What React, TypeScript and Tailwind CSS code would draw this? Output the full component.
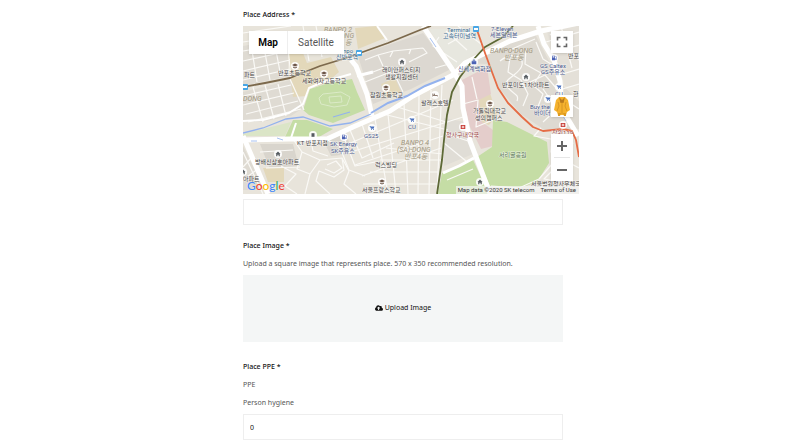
import { useState } from "react";
import { FaCloudUploadAlt } from "react-icons/fa";

const blocks = [
  { d: "M0 20L45 12V50L0 60Z", fill: "#dfdbd3" },
  { d: "M0 66L48 54L60 82L48 90L18 96H0Z", fill: "#dfdbd3" },
  { d: "M50 0H105L112 24L64 42Z", fill: "#e8e4da" },
  { d: "M115 30L145 19L180 7L208 43L192 51L168 63L130 78Z", fill: "#dcd8d1" },
  { d: "M186 3H228L244 20L222 34L212 42Z", fill: "#e7e7df" },
  { d: "M220 37L264 18L292 8L318 58L336 75V103L300 103L278 88L256 62L244 38Z", fill: "#dedad2" },
  { d: "M303 4L336 0V60L322 60L313 30Z", fill: "#e4e0d8" },
  { d: "M17 118H50L56 141H26Z", fill: "#d9d5cd" },
  { d: "M80 114L104 107L108 128L88 130Z", fill: "#d9d5cd" },
  { d: "M0 120L22 164H0Z", fill: "#dedad2" },
  { d: "M201 92L222 96L230 128L201 140Z", fill: "#e0ddd6" },
  { d: "M45 28L60 27L64 37L88 31L96 46L82 58L68 62L64 70L50 71Z", fill: "#e3d8ba" },
  { d: "M112 2L134 0L142 12L115 23Z", fill: "#e3d8ba" },
  { d: "M138 58L152 52L158 66L142 72Z", fill: "#e3d8ba" },
  { d: "M20 142H41V156H25Z", fill: "#e3d8ba" },
  { d: "M234 72L246 64L254 89L246 99L234 95Z", fill: "#e3d8ba" },
  { d: "M219 54L244 41L248 68L236 74L239 96L250 104V120L238 123L227 101L221 76Z", fill: "#e4cdcb" },
  { d: "M67 63L86 57L109 53L114 66L122 84L90 97L66 89L60 84Z", fill: "#c5dda5" },
  { d: "M50 94L64 94L90 103L76 111H42Z", fill: "#c5dda5" },
  { d: "M0 108L48 96L42 110H0Z", fill: "#dbe5c7" },
  { d: "M250 94L264 96L284 106L304 116L306 137L294 156L277 162L247 160L234 131L249 121Z", fill: "#c5dda5" },
  { d: "M199 147L230 134L246 168H195Z", fill: "#c5dda5" },
];

const minorRoads = [
  // north west grid
  "M0 7L48 0M0 16L52 8M0 25L47 17M0 35L46 25M0 45L47 34M0 54L47 43M8 18L14 56M20 16L27 54M31 14L38 51M44 12L48 52M60 0L66 35M73 0L79 31M88 0L94 27",
  "M0 70L48 59M0 79L51 67M3 88L55 75M5 96L58 83M10 61L20 96M22 59L31 93M35 58L43 90M47 53L61 84",
  // centre
  "M122 34L135 29L150 25L180 22M130 46L143 41L158 43M135 29L140 40M150 25L147 31M180 22L184 27L166 36M122 56L150 45M150 45L160 66M168 23L166 28M196 11L190 20L214 36M203 5L224 24M215 0L238 18M205 18L228 5M192 42L206 38",
  // residential streets
  "M86 115L96 119L106 144L122 150M100 109L112 140L132 136M107 104L119 132L151 117M119 98L130 132M132 93L145 168M145 88L153 168M161 77L165 168M176 69L175 168M188 64L186 168M199 59L194 168",
  "M105 118L210 74M108 126L220 91M112 139L200 110M119 150L198 122M136 87L205 104M151 80L203 96M120 158L195 158M127 146H195M137 134H198M143 122L200 128",
  "M50 113L59 126L54 143L67 148L62 168M59 126L77 134L67 148M77 134L99 132L101 144L91 151L76 145L73 155L87 168M99 132L106 145L101 158L113 168M84 139L93 135L99 142L91 147L82 143M38 140L53 148L42 160L54 168M68 115L70 125L85 130",
  "M17 126L50 124M0 126L20 168M23 142L57 141M10 130L0 141M16 142L0 154",
  // east apartments
  "M257 35C267 26 281 29 279 39S260 52 264 60S277 67 274 75M267 31L265 46L278 54L285 68L280 80M283 23L282 38L298 47L290 59L300 68L294 83M293 16L300 33L316 43M285 57L302 49L314 63M300 63L314 83L300 96M316 49L336 43M316 64L336 58M319 72L336 83M303 89L322 83",
  "M269 23L292 13M303 16L336 6M309 27L336 19M318 0L329 42M307 8L336 34M298 102L291 110L330 117L317 132L336 142M309 113L308 126L316 138L301 153L336 159M322 115L326 153M220 78L235 74L233 101L250 94M229 51L234 73",
  "M201 117L223 135M201 107L225 115M248 160L276 162L296 153L310 137M230 143L204 154",
];

const mainRoads = [
  { d: "M-3 114L47 113H84L110 101L147 85L170 70L210 49L222 37L267 15L298 5L336 -3", width: 5 },
  { d: "M108 34L113 40L124 68L129 90", width: 5 },
  { d: "M180 0L209 43L219 60L220 82L227 115L248 170", width: 5 },
  { d: "M0 110L25 168", width: 5 },
  { d: "M295 0L301 18L311 34L317 55L319 83L335 110", width: 5 },
  { d: "M0 95L20 94L46 87L60 78L66 62L80 56L108 48", width: 2 },
  { d: "M114 50L130 46", width: 3 },
  { d: "M200 147L216 140L231 132", width: 3 },
  { d: "M48 112L53 97M134 0L144 14", width: 2 },
];

const places = [
  { x: 35, y: 49, text: "반포초등학교" },
  { x: 59, y: 57, text: "세화여자고등학교" },
  { x: 139, y: 46, text: "래미안퍼스티지" },
  { x: 142, y: 53, text: "생활지원센터" },
  { x: 127, y: 71, text: "잠원초등학교" },
  { x: 178, y: 79, text: "팔래스호텔" },
  { x: 54, y: 119, text: "KT 반포지점" },
  { x: 12, y: 138, text: "방배신삼호아파트" },
  { x: 0, y: 155, text: "아파트" },
  { x: 1, y: 51, text: "파트" },
  { x: 132, y: 141, text: "럭스빌딩" },
  { x: 119, y: 166, text: "서울프랑스학교" },
  { x: 230, y: 87, text: "가톨릭대학교" },
  { x: 232, y: 94, text: "성의캠퍼스" },
  { x: 259, y: 61, text: "반포미도1차아파트" },
  { x: 325, y: 32, text: "반포" },
  { x: 330, y: 70, text: "한" },
  { x: 256, y: 131, text: "서리골공원", fill: "#567452" },
  { x: 203, y: 111, text: "청사구내약국", fill: "#9c4848" },
  { x: 309, y: 109, text: "잠원119", fill: "#9c4848" },
  { x: 288, y: 160, text: "서울법원청사우체국" },
  { x: 215, y: 45, text: "신세계백화점", fill: "#45558a" },
  { x: 204, y: 6, text: "Terminal", fill: "#34668d" },
  { x: 200, y: 12, text: "고속터미널역", fill: "#34668d" },
  { x: 100, y: 27, text: "npo", fill: "#34668d" },
  { x: 93, y: 33, text: "신반포역", fill: "#34668d" },
  { x: 248, y: 5, text: "7-Eleven", fill: "#45558a" },
  { x: 247, y: 11, text: "세븐일레븐", fill: "#45558a" },
  { x: 297, y: 42, text: "GS Caltex", fill: "#45558a" },
  { x: 298, y: 48, text: "GS주유소", fill: "#45558a" },
  { x: 312, y: 70, text: "CU", fill: "#45558a" },
  { x: 287, y: 83, text: "Buy the", fill: "#45558a" },
  { x: 291, y: 89, text: "바이더", fill: "#45558a" },
  { x: 87, y: 120, text: "SK Energy", fill: "#45558a" },
  { x: 88, y: 127, text: "SK주유소", fill: "#45558a" },
  { x: 121, y: 112, text: "GS25", fill: "#45558a" },
  { x: 165, y: 103, text: "CU", fill: "#45558a" },
];

const districts = [
  { x: 81, y: 6, text: "BANPO 2" },
  { x: 84, y: 12, text: "(I)-DONG" },
  { x: 102, y: 19, text: "동" },
  { x: 0, y: 75, text: "DONG" },
  { x: 247, y: 27, text: "BANPO-DONG" },
  { x: 261, y: 34, text: "반포동" },
  { x: 158, y: 119, text: "BANPO 4" },
  { x: 154, y: 126, text: "(SA)-DONG" },
  { x: 161, y: 133, text: "반포4동" },
];

const pins = [
  { x: 52, y: 40, kind: "school" },
  { x: 81, y: 48, kind: "school" },
  { x: 143, y: 62, kind: "school" },
  { x: 139, y: 156, kind: "school" },
  { x: 247, y: 78, kind: "school" },
  { x: 159, y: 36, kind: "home" },
  { x: 35, y: 128, kind: "home" },
  { x: 283, y: 51, kind: "home" },
  { x: 0, y: 146, kind: "home" },
  { x: 237, y: 156, kind: "home" },
  { x: 192, y: 69, kind: "bed" },
  { x: 70, y: 109, kind: "dot" },
  { x: 129, y: 102, kind: "cart" },
  { x: 169, y: 94, kind: "cart" },
  { x: 316, y: 61, kind: "cart" },
  { x: 305, y: 73, kind: "cart" },
  { x: 101, y: 111, kind: "fuel" },
  { x: 311, y: 32, kind: "fuel" },
  { x: 231, y: 36, kind: "bag" },
  { x: 220, y: 101, kind: "cross" },
  { x: 320, y: 99, kind: "cross" },
];

const pinShapes: Record<string, { d: string; fill: string }> = {
  school: { d: "M-3 -1L0 -2.5L3 -1L0 .5ZM-2 .5V1.5L0 2.5L2 1.5V.5L0 1.4Z", fill: "#6c5547" },
  home: { d: "M-2.5 0L0 -2.5L2.5 0H1.8V2.2H.6V.7H-.6V2.2H-1.8V0Z", fill: "#555b60" },
  bed: { d: "M-2.5 -1.5H-2V0H2.5V1.5H2V.8H-2V1.5H-2.5ZM-1.5 -1.2H0V-.3H-1.5Z", fill: "#6c5547" },
  dot: { d: "M-1.5 -1.8H1.5V1.8H-1.5Z", fill: "#555b60" },
  cart: { d: "M-2.5 -2H-1.5L-1.3 -1.5H2.4L1.6 .7H-1L-2 -1.5H-2.5ZM-1 1.2H0V2H-1ZM1 1.2H2V2H1Z", fill: "#4b71bd" },
  fuel: { d: "M-2 -2.3H1V0H1.5V1.3H2V-1L1.4 -1.6L1.8 -2L2.5 -1.2V2H1.2V.5H1V2.3H-2ZM-1.4 -1.7V-.4H.4V-1.7Z", fill: "#4b62b5" },
  bag: { d: "M-2.3 -.7H-1.4C-1.3 -3 1.3 -3 1.4 -.7H2.3V2.3H-2.3ZM-.7 -.7H.7C.6 -2 -.6 -2 -.7 -.7Z", fill: "#4b62b5" },
  cross: { d: "M-2.3 -2H2.3V2H-2.3ZM-.4 -1.3V-.4H-1.3V.4H-.4V1.3H.4V.4H1.3V-.4H.4V-1.3Z", fill: "#c9413b" },
};

function MapDrawing() {
  return (
    <svg
      viewBox="0 0 336 168"
      className="block w-full"
      role="img"
      aria-label="Map of Banpo-dong"
    >
      <rect width="336" height="168" fill="#e8e4db" />
      {blocks.map((block) => (
        <path key={block.d} d={block.d} fill={block.fill} />
      ))}
      <g fill="none" stroke="#faf9f6" strokeWidth="1.2" strokeLinejoin="round">
        {minorRoads.map((d) => (
          <path key={d} d={d} />
        ))}
      </g>
      {/* stadium in the park */}
      <g fill="none" stroke="#dbeac7" strokeWidth="1">
        <path d="M80 68L98 66L107 71L104 79L91 81L78 78L76 72Z" />
        <path d="M86 71L98 70L99 76L87 77Z" />
      </g>
      {mainRoads.map((road) => (
        <path
          key={road.d}
          d={road.d}
          fill="none"
          stroke="#fff"
          strokeWidth={road.width}
          strokeLinejoin="round"
        />
      ))}
      {/* river */}
      <g fill="none" stroke="#93b2ee">
        <path d="M0 107L20 102L43 93L60 91L87 100L107 97L128 88" strokeWidth="1.3" />
        <path d="M90 91L107 86" strokeWidth="1.3" />
        <path d="M128 87L145 77L164 70L182 60L202 52" strokeWidth="2" />
        <path d="M8 115H14M34 112L40 114M187 12L193 21M320 90L323 95" strokeWidth=".8" />
      </g>
      <g fill="none" strokeWidth="1.800" strokeLinejoin="round">
        <path d="M0 61L22 57L47 52L77 40L100 33L117 27L145 17L177 4L188 0" stroke="#7c694c" />
        <path d="M270 0L260 11L242 21L230 34L217 51L209 66L204 89L201 114L199 134L194 168" stroke="#5d6936" />
        <path d="M234 4L242 27L249 46L255 62L265 77L279 91L290 101L300 105L320 103L329 105L333 114L336 131" stroke="#e56c45" />
      </g>
      {[[2, 61], [116, 27], [233, 3]].map(([x, y]) => (
        <g key={x}>
          <rect x={x - 3} y={y - 3} width="6" height="6" rx="1" fill="#48a6e5" />
          <path d={`M${x - 2} ${y - 1}h4v2h-4z`} fill="#fff" />
        </g>
      ))}
      <g
        className="font-['Roboto','Noto_Sans_CJK_KR',sans-serif]"
        fontSize="7"
        fontStyle="italic"
        fill="#a0967e"
      >
        {districts.map((label) => (
          <text key={label.text} x={label.x} y={label.y}>
            {label.text}
          </text>
        ))}
      </g>
      {pins.map((pin) => (
        <g key={`${pin.x}-${pin.y}`} transform={`translate(${pin.x} ${pin.y})`}>
          <circle r="4" fill="#fff" fillOpacity=".9" />
          <path d={pinShapes[pin.kind].d} fill={pinShapes[pin.kind].fill} fillRule="evenodd" />
        </g>
      ))}
      <g
        className="font-['Roboto','Noto_Sans_CJK_KR',sans-serif]"
        fontSize="6"
        stroke="#fff"
        strokeWidth="1"
        strokeOpacity=".6"
        paintOrder="stroke"
      >
        {places.map((place) => (
          <text key={`${place.text}-${place.y}`} x={place.x} y={place.y} fill={place.fill || "#44423f"}>
            {place.text}
          </text>
        ))}
      </g>
    </svg>
  );
}

function GoogleLogo() {
  return (
    <div className="absolute bottom-0 left-1 font-['Lato',sans-serif] text-[12px] leading-[16px] font-medium text-[#4285f4] text-shadow-[0_0_1px_white]">
      G<span className="text-[#ea4335]">o</span>
      <span className="text-[#fbbc05]">o</span>g
      <span className="text-[#34a853]">l</span>
      <span className="text-[#ea4335]">e</span>
    </div>
  );
}

function PlaceMap() {
  return (
    <div className="relative w-[105%] overflow-hidden font-['Roboto',sans-serif]">
      <MapDrawing />
      <div className="absolute top-[5px] left-1.5 flex h-[23px] bg-white text-[10px] shadow-sm">
        <button type="button" className="w-[39px] border-r border-[#eee] font-semibold text-black">
          Map
        </button>
        <button type="button" className="w-14 text-[#565656]">
          Satellite
        </button>
      </div>
      <button
        type="button"
        aria-label="Toggle fullscreen view"
        className="absolute top-[5px] right-1.5 grid size-[22px] place-items-center bg-white shadow-sm"
      >
        <svg viewBox="0 0 12 12" className="size-3" fill="none" stroke="#666" strokeWidth="1.6">
          <path d="M1.5 4.5V1.5H4.5M7.5 1.5H10.5V4.5M10.5 7.5V10.5H7.5M4.5 10.5H1.5V7.5" />
        </svg>
      </button>
      <button
        type="button"
        aria-label="Drag Pegman onto the map to open Street View"
        className="absolute top-[69px] right-1.5 grid size-[22px] place-items-center bg-white shadow-sm"
      >
        <svg viewBox="0 0 18 20" className="h-5 w-[18px]">
          <path d="M6 1H12L15 4L17 14L14 16L13 19H5L4 16L1 14L3 4Z" fill="#f5b22d" />
          <path d="M6 1L9 4L12 1L10.500 7H7.500Z" fill="#b97a1c" />
          <path d="M5 6L6 10L4 15M13 6L12 10L14 15M9 6V18" fill="none" stroke="#cf8f22" strokeWidth=".8" />
          <path d="M5 17H8L7 20H5ZM10 17H13V20H11Z" fill="#dc9b24" />
        </svg>
      </button>
      <div className="absolute right-1.5 bottom-[13px] flex w-[22px] flex-col items-center bg-white shadow-sm">
        <button type="button" aria-label="Zoom in" className="grid h-[23px] w-full place-items-center">
          <svg viewBox="0 0 10 10" className="size-[10px]" stroke="#666" strokeWidth="2">
            <path d="M5 0V10M0 5H10" />
          </svg>
        </button>
        <div className="h-px w-4 bg-[#e6e6e6]" />
        <button type="button" aria-label="Zoom out" className="grid h-[23px] w-full place-items-center">
          <svg viewBox="0 0 10 10" className="size-[10px]" stroke="#666" strokeWidth="2">
            <path d="M0 5H10" />
          </svg>
        </button>
      </div>
      <GoogleLogo />
      <div className="absolute right-0 bottom-0 flex gap-1.5 bg-[#f5f5f5]/70 pr-[3px] pl-0.5 text-[6px] leading-[8px] text-[#333]">
        <span>Map data ©2020 SK telecom</span>
        <a href="#terms">Terms of Use</a>
      </div>
    </div>
  );
}

export default function App() {
  const [address, setAddress] = useState("");
  const [hygiene, setHygiene] = useState("0");

  return (
    <main className="min-h-screen bg-white font-['Noto_Sans',sans-serif] text-[7px] leading-[18px] text-[#555]">
      <form className="mx-auto w-full max-w-[320px] pt-1.5">
        <section>
          <label htmlFor="address" className="mb-0.5 block font-medium text-[#111]">
            Place Address *
          </label>
          <PlaceMap />
          <input
            id="address"
            value={address}
            onChange={(e) => setAddress(e.target.value)}
            className="mt-[5px] block h-[26px] w-full border border-[#eee] px-1.5 text-[#111] outline-none"
          />
        </section>

        <section className="mt-3">
          <h2 className="font-medium text-[#111]">Place Image *</h2>
          <p>Upload a square image that represents place. 570 x 350 recommended resolution.</p>
          <button
            type="button"
            className="mt-0.5 flex h-[67px] w-full items-center justify-center gap-0.5 bg-[#f4f6f6] pb-0.5 text-[#111]"
          >
            <FaCloudUploadAlt className="size-2" />
            Upload Image
          </button>
        </section>

        <section className="mt-4">
          <h2 className="font-medium text-[#111]">Place PPE *</h2>
          <p>PPE</p>
          <label htmlFor="hygiene" className="block">
            Person hygiene
          </label>
          <input
            id="hygiene"
            value={hygiene}
            onChange={(e) => setHygiene(e.target.value)}
            className="mt-0.5 block h-[26px] w-full border border-[#eee] px-1.5 text-[#111] outline-none"
          />
        </section>
      </form>
    </main>
  );
}
